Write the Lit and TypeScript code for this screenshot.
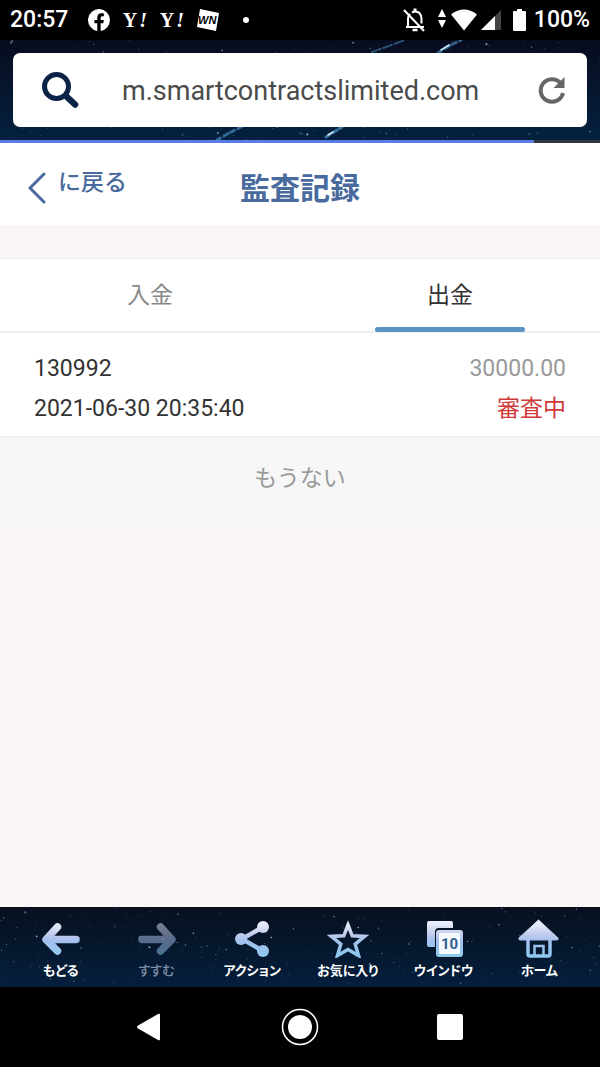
import { LitElement, html, svg, css } from "lit";
import { customElement, property, state } from "lit/decorators.js";

/** Night-sky backdrop, filled with stars from a seeded generator. */
@customElement("star-field")
export class StarField extends LitElement {
  @property({ type: Number }) seed = 7;
  @property({ type: Number }) count = 260;
  @property({ type: Boolean }) meteors = false;

  static styles = css`
    :host { display: block; overflow: hidden; background: linear-gradient(#080c1e, #04213f); }
    :host([toolbar]) { background: linear-gradient(#07101f, #06162a 40%, #041f3d); }
    svg { display: block; width: 100%; height: 100%; }
  `;

  private stars() {
    let s = this.seed;
    const next = () => {
      s = (s * 16807) % 2147483647;
      return s / 2147483647;
    };
    for (let i = 0; i < 10; i++) next();
    return Array.from({ length: this.count }, () => ({
      x: next() * 600,
      y: next() * 100,
      r: 0.4 + Math.pow(next(), 6) * 0.7,
      o: 0.2 + next() * 0.6,
    }));
  }

  render() {
    return html`<svg viewBox="0 0 600 100" preserveAspectRatio="xMidYMid slice" aria-hidden="true">
      ${this.stars().map((p) => svg`<circle cx=${p.x} cy=${p.y} r=${p.r} fill="#b9d4ee" opacity=${p.o} />`)}
      ${this.meteors
        ? svg`<g fill="none" stroke="#4f9bd0" stroke-linecap="round">
            <path d="M372 12l17-6 16-6" stroke-width="2" opacity=".5" stroke-dasharray="5 2 2 3" />
            <path d="M438 13l11-7 12-6" stroke-width="3" opacity=".6" stroke-dasharray="4 4 6 3" />
            <path d="M441 10l8-5" stroke="#cfe9ff" stroke-width="1.5" />
            <path d="M217 100l12-7 14-7" stroke-width="3" opacity=".6" stroke-dasharray="4 4 5 3" />
            <path d="M326 97l8-5 8-5" stroke-width="3" opacity=".7" stroke-dasharray="5 3" />
            <path d="M328 95l5-3" stroke="#cfe9ff" stroke-width="1.5" />
          </g>`
        : null}
    </svg>`;
  }
}

@customElement("status-bar")
export class StatusBar extends LitElement {
  static styles = css`
    :host {
      display: flex; align-items: center; justify-content: space-between;
      height: 40px; padding: 0 10px; background: #000; color: #fff;
      font: 500 23px/42px Roboto, sans-serif;
    }
    .group { display: flex; align-items: center; }
    .apps { gap: 12px; }
    .apps svg:first-of-type { margin-left: 8px; }
    .yahoo { width: 25px; font: 700 20px/24px "Liberation Serif", serif; text-align: center; }
    .yahoo i { padding-left: 2px; }
    .system { gap: 4px; }
    .battery { margin: 0 4px 0 8px; }
    svg { display: block; flex: none; }
  `;

  render() {
    return html`
      <div class="group apps">
        <span>20:57</span>
        <svg width="22" height="22" viewBox="0 0 24 24" fill="#fff"><path d="M24 12a12 12 0 1 0-13.9 11.9v-8.4H7V12h3.1V9.4c0-3 1.800-4.700 4.500-4.700 1.300 0 2.700.2 2.700.2v3h-1.500c-1.500 0-2 .9-2 1.900V12h3.400l-.5 3.500h-2.900v8.400A12 12 0 0 0 24 12z" /></svg>
        <span class="yahoo">Y<i>!</i></span>
        <span class="yahoo">Y<i>!</i></span>
        <svg width="24" height="24" viewBox="0 0 24 24">
          <path d="M4 1l19 4-3 18-19-4z" fill="#fff" />
          <text x="2" y="16" font-family="Liberation Sans, sans-serif" font-weight="700" font-style="italic" font-size="11" fill="#000">WN</text>
        </svg>
        <svg width="32" height="8" viewBox="0 0 32 8"><circle cx="14" cy="4" r="3" fill="#fff" /></svg>
      </div>
      <div class="group system">
        <svg width="44" height="26" viewBox="0 0 44 26" fill="none" stroke="#fff" stroke-width="2">
          <path d="M3 20h18M5 20v-8q0-3 2-5M9 5.500q2-1 3-1 6 0 6.500 7v5" /><path d="M12 1.500v3" stroke-width="3" />
          <path d="M1 3l20 21" /><path d="M9.500 23h5" stroke-width="2.500" />
          <g fill="#fff" stroke="none"><path d="M35 10h8l-4-8z" /><path d="M35 13h8l-4 8z" /></g>
        </svg>
        <svg width="26" height="22" viewBox="0 0 26 22" fill="#fff"><path d="M0 5.500Q13-4.500 26 5.500L13 21.500z" /></svg>
        <svg width="20" height="22" viewBox="0 0 20 22"><path d="M20 1v20H0z" fill="#444" /><path d="M14 7v14H0z" fill="#fff" /></svg>
        <svg class="battery" width="13" height="22" viewBox="0 0 13 22" fill="#fff"><path d="M4 0h5v2h3q1 0 1 1v18q0 1-1 1H1q-1 0-1-1V3q0-1 1-1h3z" /></svg>
        <span>100%</span>
      </div>`;
  }
}

@customElement("address-bar")
export class AddressBar extends LitElement {
  static styles = css`
    :host { display: block; }
    .bar { display: grid; height: 100px; }
    .bar > * { grid-area: 1 / 1; min-width: 0; }
    .field {
      z-index: 1; margin: 13px; display: flex; align-items: center; gap: 42px;
      padding: 0 20px 0 27px; background: #fff; border-radius: 7px;
    }
    input {
      flex: 1; min-width: 0; height: 48px; padding: 2px 0 0; border: 0; outline: 0; background: none;
      color: #4b4b4b; font: 27px/46px Roboto, sans-serif;
    }
    button { padding: 0; border: 0; background: none; }
    svg { display: block; }
    .progress { height: 3px; background: #33363f; }
    .done { height: 3px; background: #5a7be8; }
  `;
  @property({ type: Number }) progress = 89;

  render() {
    return html`
      <div class="bar">
        <star-field seed="31" meteors></star-field>
        <form class="field" @submit=${(e: Event) => e.preventDefault()}>
          <svg width="40" height="40" viewBox="0 0 40 40" fill="none" stroke="#0a2347" aria-hidden="true">
            <circle cx="16.500" cy="16.500" r="12" stroke-width="5" /><path d="M26 26l9 8.500" stroke-width="6.500" stroke-linecap="round" />
          </svg>
          <input type="text" aria-label="URL" value="m.smartcontractslimited.com" />
          <button type="button" aria-label="再読み込み">
            <svg width="30" height="30" viewBox="0 0 30 30" fill="none" stroke="#666" stroke-width="4">
              <path d="M23.500 8A11.300 11.300 0 1 0 26 18" /><path d="M27.500 2v11h-11z" fill="#666" stroke="none" />
            </svg>
          </button>
        </form>
      </div>
      <div class="progress"><div class="done" style="width:${this.progress}%"></div></div>`;
  }
}

interface Entry { id: string; time: string; amount: string; status: string; }

@customElement("audit-records")
export class AuditRecords extends LitElement {
  static styles = css`
    :host {
      display: block; background: #faf6f7; color: #333;
      font: 23px/40px Roboto, "Noto Sans CJK JP", sans-serif;
    }
    header {
      display: grid; grid-template-columns: 1fr auto 1fr; align-items: center;
      height: 82px; margin-bottom: 33px; padding: 0 27px; background: #fff; color: #486a9d;
    }
    h1 { margin: 0; padding-top: 10px; font-size: 30px; line-height: 40px; font-weight: 700; }
    .back { display: flex; align-items: center; gap: 12px; color: inherit; text-decoration: none; font-weight: 500; }
    .back svg { margin-top: 8px; }
    .back span { padding-bottom: 2px; }
    .tabs { display: flex; border: solid #eee; border-width: 1px 0 2px; background: #fff; }
    .tab {
      flex: 1; display: grid; justify-items: center; align-content: end; height: 73px; padding: 0;
      margin-bottom: -1px; border: 0; background: none; color: #888; font: inherit;
    }
    .tab::after { content: ""; width: 50%; height: 5px; margin-top: 11px; border-radius: 3px; }
    .tab[aria-selected="true"] { color: #333; }
    .tab[aria-selected="true"]::after { background: #5b93c5; }
    ul { margin: 0; padding: 0; list-style: none; }
    li {
      display: grid; grid-template-columns: 1fr auto; padding: 16px 34px 7px;
      border-bottom: 2px solid #f1f1f1; background: #fff;
    }
    .amount, .status { text-align: right; }
    .amount { color: #999; }
    .status { color: #cf3a39; }
    .end { margin: 0; padding: 21px 0 31px; background: #f7f7f7; color: #999; text-align: center; }
  `;
  @state() private tab = 1;
  private tabs = ["入金", "出金"];
  private entries: Entry[] = [
    { id: "130992", time: "2021-06-30 20:35:40", amount: "30000.00", status: "審査中" },
  ];

  render() {
    return html`
      <header>
        <a class="back" href="#">
          <svg width="19" height="32" viewBox="0 0 19 32" fill="none" stroke="currentColor" stroke-width="3" stroke-linecap="round" stroke-linejoin="round" aria-hidden="true"><path d="M17 2L3 16l14 14" /></svg>
          <span>に戻る</span>
        </a>
        <h1>監査記録</h1>
      </header>
      <div class="tabs" role="tablist">
        ${this.tabs.map((t, i) => html`<button class="tab" role="tab" aria-selected=${i === this.tab} @click=${() => (this.tab = i)}>${t}</button>`)}
      </div>
      <ul>
        ${this.entries.map((e) => html`<li>
          <span>${e.id}</span><span class="amount">${e.amount}</span>
          <span>${e.time}</span><span class="status">${e.status}</span>
        </li>`)}
      </ul>
      <p class="end">もうない</p>`;
  }
}

@customElement("browser-toolbar")
export class BrowserToolbar extends LitElement {
  static styles = css`
    :host { display: grid; height: 80px; }
    star-field, nav { grid-area: 1 / 1; min-width: 0; }
    nav { z-index: 1; display: flex; padding: 0 13px; }
    button {
      flex: 1; display: flex; flex-direction: column; align-items: center; gap: 2px; padding: 11px 0 0;
      border: 0; background: none; color: #fff; white-space: nowrap;
      font: 700 13px/20px "Noto Sans CJK JP", sans-serif; font-feature-settings: "palt";
    }
    button:disabled { color: #8090a6; font-weight: 500; }
    button:disabled svg { opacity: 0.5; }
    svg { display: block; }
  `;

  private items = [
    { label: "もどる", icon: svg`<path d="M17.500 9L6 21.500l11.500 11.500M7 21.500h29" fill="none" stroke="url(#ice)" stroke-width="7.500" stroke-linecap="round" stroke-linejoin="round" />` },
    { label: "すすむ", disabled: true, icon: svg`<path d="M24.500 9L36 21.500 24.500 33M35 21.500H6" fill="none" stroke="url(#ice)" stroke-width="7.500" stroke-linecap="round" stroke-linejoin="round" />` },
    { label: "アクション", icon: svg`<path d="M32 9L11 21l21 12" fill="none" stroke="url(#ice)" stroke-width="4.500" /><g fill="url(#ice)"><circle cx="32" cy="9" r="6" /><circle cx="10" cy="21" r="6" /><circle cx="32" cy="33" r="6" /></g>` },
    { label: "お気に入り", icon: svg`<path d="M21 7l4.200 10.800 12.300.6-9.300 7.800 3.300 11.300L21 31.500l-10.500 6 3.300-11.300-9.300-7.800 12.300-.6z" fill="none" stroke="url(#ice)" stroke-width="3.500" />` },
    { label: "ウインドウ", icon: svg`<path d="M6 3h22q2 0 2 2v5H16q-4 0-4 4v15H6q-2 0-2-2V5q0-2 2-2z" fill="url(#ice)" />
      <rect x="13" y="12" width="27" height="27" rx="3" fill="url(#ice)" /><rect x="16" y="15" width="21" height="21" rx="1" fill="#f5faff" />
      <text x="26.500" y="31" text-anchor="middle" font-family="Roboto, sans-serif" font-weight="700" font-size="15" fill="#345e95">10</text>` },
    { label: "ホーム", icon: svg`<path d="M20.500 2L40 20q1 1.500-1 2H2q-2-.5-1-2z" fill="url(#ice)" stroke="url(#ice)" stroke-linejoin="round" />
      <path d="M10 21v15q0 2 2 2h18q2 0 2-2V21" fill="none" stroke="url(#ice)" stroke-width="3.500" /><path d="M16.500 38V28h9v10" fill="none" stroke="url(#ice)" stroke-width="2.500" />` },
  ];

  render() {
    return html`
      <star-field toolbar seed="977" count="240"></star-field>
      <nav>
        ${this.items.map((it) => html`<button ?disabled=${it.disabled}>
          <svg width="42" height="40" viewBox="0 0 42 40" aria-hidden="true">
            <defs><linearGradient id="ice" gradientUnits="userSpaceOnUse" x1="0" y1="3" x2="0" y2="38">
              <stop offset="0" stop-color="#f1f2fb" /><stop offset=".4" stop-color="#c0cbed" /><stop offset=".55" stop-color="#a5c0ed" /><stop offset="1" stop-color="#8fc8ef" />
            </linearGradient></defs>
            ${it.icon}
          </svg>
          <span>${it.label}</span>
        </button>`)}
      </nav>`;
  }
}

@customElement("system-nav")
export class SystemNav extends LitElement {
  static styles = css`
    :host { display: flex; height: 80px; padding: 0 12.5%; background: #000; }
    button { flex: 1; display: grid; place-items: center; padding: 0; border: 0; background: none; }
  `;

  render() {
    return html`
      <button aria-label="戻る"><svg width="28" height="28" viewBox="0 0 28 28" fill="#fff"><path d="M2 12.500L22.500.8q1.500-.5 1.500 1v24.400q0 1.500-1.500 1L2 15.500q-2-1.500 0-3z" /></svg></button>
      <button aria-label="ホーム"><svg width="38" height="38" viewBox="0 0 38 38"><circle cx="19" cy="19" r="17.500" fill="none" stroke="#fff" stroke-width="1.500" /><circle cx="19" cy="19" r="12" fill="#fff" /></svg></button>
      <button aria-label="履歴"><svg width="26" height="26" viewBox="0 0 26 26"><rect width="26" height="26" rx="2" fill="#fff" /></svg></button>`;
  }
}

@customElement("app-root")
export class AppRoot extends LitElement {
  static styles = css`
    :host { display: flex; flex-direction: column; min-height: 100vh; background: #faf6f7; }
    audit-records { flex: 1; }
  `;

  render() {
    return html`
      <status-bar></status-bar>
      <address-bar></address-bar>
      <audit-records></audit-records>
      <browser-toolbar></browser-toolbar>
      <system-nav></system-nav>`;
  }
}
